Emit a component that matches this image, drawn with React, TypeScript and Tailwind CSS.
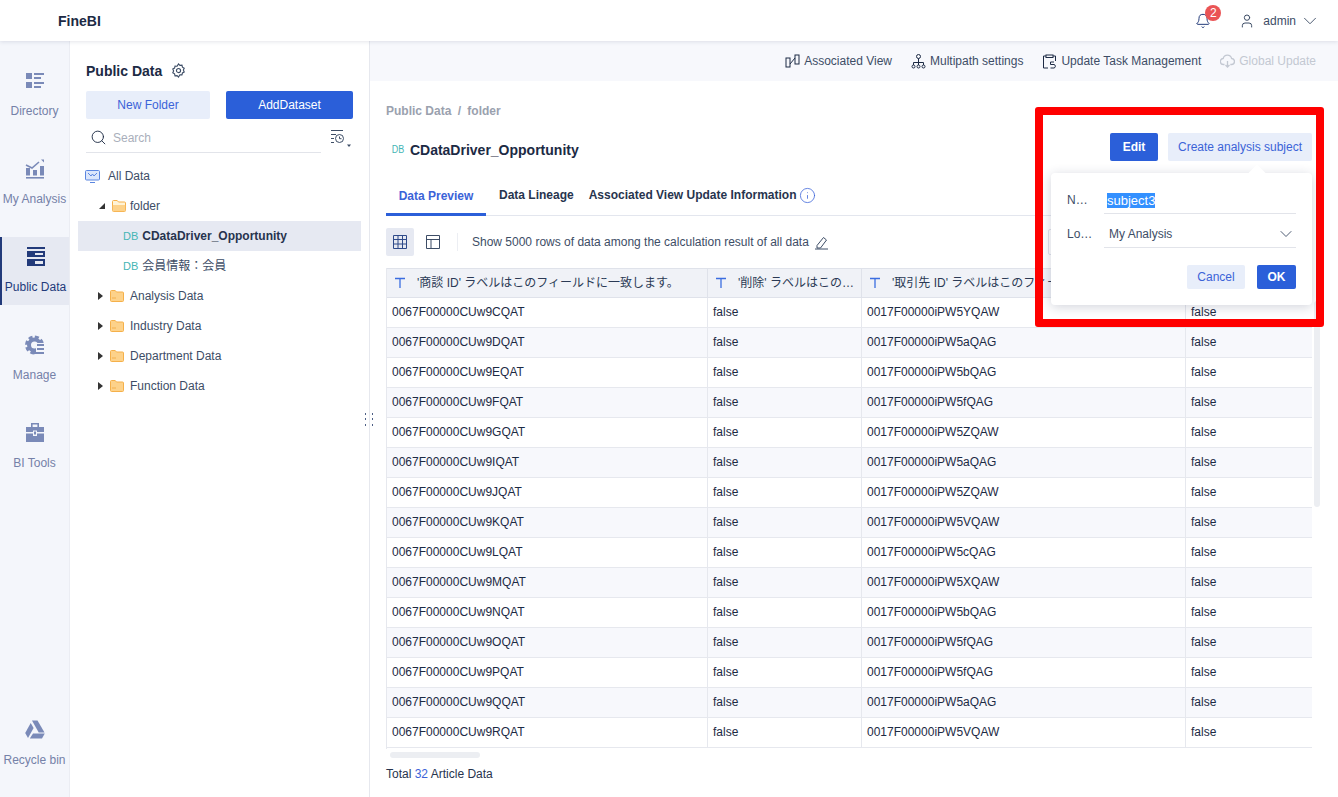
import { Bell, User, ChevronDown, Search, Info } from 'lucide-react';

const font = 'font-["Liberation_Sans","Noto_Sans_CJK_JP",sans-serif]';

const rows = [
  ['0067F00000CUw9CQAT', '0017F00000iPW5YQAW'],
  ['0067F00000CUw9DQAT', '0017F00000iPW5aQAG'],
  ['0067F00000CUw9EQAT', '0017F00000iPW5bQAG'],
  ['0067F00000CUw9FQAT', '0017F00000iPW5fQAG'],
  ['0067F00000CUw9GQAT', '0017F00000iPW5ZQAW'],
  ['0067F00000CUw9IQAT', '0017F00000iPW5aQAG'],
  ['0067F00000CUw9JQAT', '0017F00000iPW5ZQAW'],
  ['0067F00000CUw9KQAT', '0017F00000iPW5VQAW'],
  ['0067F00000CUw9LQAT', '0017F00000iPW5cQAG'],
  ['0067F00000CUw9MQAT', '0017F00000iPW5XQAW'],
  ['0067F00000CUw9NQAT', '0017F00000iPW5bQAG'],
  ['0067F00000CUw9OQAT', '0017F00000iPW5fQAG'],
  ['0067F00000CUw9PQAT', '0017F00000iPW5fQAG'],
  ['0067F00000CUw9QQAT', '0017F00000iPW5aQAG'],
  ['0067F00000CUw9RQAT', '0017F00000iPW5VQAW'],
];

function DirectoryIcon() {
  return (
    <svg width="20" height="20" viewBox="0 0 20 20" fill="#7a8ab8">
      <rect x="1" y="2" width="6" height="6" />
      <rect x="1" y="11" width="6" height="6" />
      <rect x="9" y="2" width="10" height="2" />
      <rect x="9" y="6" width="7" height="2" />
      <rect x="9" y="11" width="10" height="2" />
      <rect x="9" y="15" width="7" height="2" />
    </svg>
  );
}

function AnalysisIcon() {
  return (
    <svg width="20" height="20" viewBox="0 0 20 20" fill="#7a8ab8">
      <rect x="1" y="18" width="18" height="1.6" />
      <rect x="1" y="9" width="4" height="7.5" />
      <rect x="8" y="11" width="4" height="5.5" />
      <rect x="15" y="7" width="4" height="9.5" />
      <path d="M1 6l6 3 7-6" fill="none" stroke="#7a8ab8" strokeWidth="1.6" />
      <path d="M16 0.5l3 0v3z" />
    </svg>
  );
}

function PublicDataIcon() {
  return (
    <svg width="20" height="20" viewBox="0 0 20 20" fill="#223a7a">
      <rect x="1" y="0" width="18" height="2" />
      <path d="M1 4h18v6H1zM9 6v2h8V6z" fillRule="evenodd" />
      <path d="M1 12h18v7H1zM9 14v3h8v-3z" fillRule="evenodd" />
    </svg>
  );
}

function ManageIcon() {
  return (
    <svg width="20" height="20" viewBox="0 0 20 20" fill="none">
      <circle cx="9.500" cy="10" r="5.500" stroke="#7a8ab8" strokeWidth="4" />
      <circle cx="9.500" cy="10" r="8" stroke="#7a8ab8" strokeWidth="3" strokeDasharray="4 2.300" />
      <rect x="11" y="8" width="10" height="12" fill="#f4f6fb" />
      <rect x="12" y="9" width="7" height="2" fill="#7a8ab8" />
      <rect x="12" y="13" width="7" height="2" fill="#7a8ab8" />
      <rect x="9" y="17" width="10" height="2" fill="#7a8ab8" />
    </svg>
  );
}

function ToolsIcon() {
  return (
    <svg width="20" height="20" viewBox="0 0 20 20" fill="#7a8ab8">
      <path d="M6 0h8v4h-1.6V1.6H7.600V4H6z" />
      <path d="M1 4h18v5h-7V7.500H8V9H1z" />
      <path d="M1 10.500h7V13h4v-2.500h7V19H1z" />
      <rect x="9" y="8.500" width="2" height="3" />
    </svg>
  );
}

function RecycleIcon() {
  return (
    <svg width="20" height="20" viewBox="0 0 20 20" fill="#7a8ab8">
      <path d="M7 .5h5.500l7 12h-5.800z" />
      <path d="M5.700 3 .2 13 3 18l5.600-10z" />
      <path d="M8 13.500h11.800L17 18.500H4.800z" />
    </svg>
  );
}

function FolderIcon({ open }: { open?: boolean }) {
  return (
    <svg width="14" height="12" viewBox="0 0 14 12">
      <path d="M.5 1.500A1 1 0 0 1 1.500.5h3.700l1.300 1.500h6a1 1 0 0 1 1 1V10.500a1 1 0 0 1-1 1h-11a1 1 0 0 1-1-1z" fill={open ? '#fff3d6' : '#fdd28a'} stroke="#f5b04a" />
      {open ? <path d="M.8 5h12.400v6.200H.8z" fill="#fdd28a" /> : <path d="M2 8h4" stroke="#f5b04a" />}
    </svg>
  );
}

function Db({ small }: { small?: boolean }) {
  return <span className={`text-[#45b5b5] font-normal ${small ? 'text-[10px] scale-x-90' : 'text-[11px]'}`}>DB</span>;
}

function Caret({ open }: { open?: boolean }) {
  return open ? (
    <svg width="6" height="6" viewBox="0 0 6 6" fill="#333"><path d="M6 0v6H0z" /></svg>
  ) : (
    <svg width="5" height="8" viewBox="0 0 5 8" fill="#333"><path d="M0 0l5 4-5 4z" /></svg>
  );
}

function NavItem({ icon, label, active }: { icon: React.ReactNode; label: string; active?: boolean }) {
  return (
    <div className={`h-[68px] flex flex-col items-center pt-[10px] gap-[12px] text-xs whitespace-nowrap ${active ? 'bg-[#e6e9f2] text-[#223a7a] border-l-2 border-[#223a7a]' : 'text-[#7581a8]'}`}>
      {icon}
      <span>{label}</span>
    </div>
  );
}

function TreeFolder({ label }: { label: string }) {
  return (
    <div className="h-[30px] flex items-center pl-[28px] text-xs text-[#3d4d66]">
      <span className="w-[12px] -ml-px"><Caret /></span>
      <FolderIcon />
      <span className="ml-[6px]">{label}</span>
    </div>
  );
}

function ActionLink({ icon, label, muted }: { icon: React.ReactNode; label: string; muted?: boolean }) {
  return (
    <div className={`flex items-center gap-[4px] ${muted ? 'text-[#c3c8d2]' : 'text-[#3d4d66]'}`}>
      {icon}
      <span>{label}</span>
    </div>
  );
}

function HeaderCell({ label, className }: { label: string; className: string }) {
  return (
    <div className={`flex items-center px-[7px] gap-[11px] border-r border-[#dfe2ea] whitespace-nowrap overflow-hidden ${className}`}>
      <svg width="12" height="12" viewBox="0 0 12 12" fill="none" stroke="#3b6de0" strokeWidth="1.300" className="shrink-0">
        <path d="M1 1.500h10M6 1.500V11" />
      </svg>
      <span>{label}</span>
    </div>
  );
}

export default function App() {
  return (
    <div className={`relative w-[1338px] h-[797px] overflow-hidden bg-white flex flex-col ${font} text-xs text-[#1c2a44]`}>
      {/* Header */}
      <header className="relative z-10 h-[41px] shrink-0 bg-white shadow-[0_1px_4px_rgba(30,40,80,0.12)] flex items-center pl-[58px] pr-[17px]">
        <span className="text-sm font-bold text-[#1c2a44]">FineBI</span>
        <div className="ml-auto flex items-center text-[#3d4d66]">
          <div className="relative">
            <Bell size={16} strokeWidth={1.5} className="text-[#223a7a]" />
            <span className="absolute -top-[8px] left-[10px] w-[16px] h-[16px] rounded-full bg-[#ea5455] text-white text-[12px] leading-[16px] text-center">2</span>
          </div>
          <User size={16} strokeWidth={1.5} className="ml-[28px]" />
          <span className="ml-[8px]">admin</span>
          <ChevronDown size={22} strokeWidth={1} className="ml-[3px]" />
        </div>
      </header>

      <div className="flex flex-1 min-h-0">
        {/* Nav rail */}
        <aside className="w-[70px] shrink-0 bg-[#f4f6fb] border-r border-[#ebedf3] flex flex-col pt-[20px] gap-[20px]">
          <NavItem icon={<DirectoryIcon />} label="Directory" />
          <NavItem icon={<AnalysisIcon />} label="My Analysis" />
          <NavItem icon={<PublicDataIcon />} label="Public Data" active />
          <NavItem icon={<ManageIcon />} label="Manage" />
          <NavItem icon={<ToolsIcon />} label="BI Tools" />
          <div className="mt-auto mb-[19px]">
            <NavItem icon={<RecycleIcon />} label="Recycle bin" />
          </div>
        </aside>

        {/* Tree panel */}
        <section className="relative w-[300px] shrink-0 border-r border-[#e6e8ee] px-[8px]">
          <div className="px-[8px] pt-[20px] h-[50px] flex items-start gap-[9px] text-sm font-bold text-[#1c2a44]">
            Public Data
            <svg width="15" height="15" viewBox="0 0 16 16" fill="none" stroke="#3d4d66" strokeWidth="1.200" className="mt-[2px]">
              <path d="M8 1l1.500 1.500 2.200-.2.500 2.100 1.900 1.100-.9 2 .9 2-1.900 1.100-.5 2.100-2.200-.2L8 15l-1.500-1.500-2.200.2-.5-2.100-1.900-1.100.9-2-.9-2 1.900-1.100.5-2.100 2.200.2z" />
              <circle cx="8" cy="8" r="2.200" />
            </svg>
          </div>
          <div className="flex gap-[16px] px-[8px]">
            <button className="w-[124px] h-[28px] rounded-[2px] bg-[#e8eefa] text-[#3b63d8]">New Folder</button>
            <button className="w-[127px] h-[28px] rounded-[2px] bg-[#2b5fd9] text-white">AddDataset</button>
          </div>
          <div className="flex items-start gap-[9px] pl-[8px] mt-[6px]">
            <div className="w-[235px] h-[28px] pb-[2px] border-b border-[#e2e4ea] flex items-center pl-[4px] gap-[6px] text-[#a9afbb]">
              <Search size={17} strokeWidth={1.3} className="text-[#1c2a44]" />
              <span>Search</span>
            </div>
            <svg width="22" height="22" viewBox="0 0 22 22" fill="none" stroke="#3d4d66" className="mt-[4px]">
              <path d="M1 1.500h12M1 5.500h5M1 9.500h3M1 13.500h3" />
              <circle cx="9.500" cy="9.500" r="4" />
              <path d="M9.500 7.500v2.200h2" />
              <path d="M17 15.500h4l-2 2.500z" fill="#3d4d66" stroke="none" />
            </svg>
          </div>
          <div className="mt-[8px] text-[#3d4d66]">
            <div className="h-[30px] flex items-center pl-[7px] gap-[8px]">
              <svg width="15" height="13" viewBox="0 0 15 13" fill="none">
                <rect x=".5" y=".5" width="14" height="9.500" rx="1" fill="#dbe6fb" stroke="#5b86e0" />
                <path d="M3 3l3 3 1.500-2L9 6l3-3" stroke="#5b86e0" />
                <path d="M5 12.500h5" stroke="#5b86e0" />
              </svg>
              All Data
            </div>
            <div className="h-[30px] flex items-center pl-[21px]">
              <span className="w-[13px] pr-[2px]"><Caret open /></span>
              <FolderIcon open />
              <span className="ml-[4px]">folder</span>
            </div>
            <div className="h-[30px] flex items-center pl-[45px] gap-[4px] bg-[#e6e9f2]">
              <Db />
              <span className="font-bold text-[#27344e]">CDataDriver_Opportunity</span>
            </div>
            <div className="h-[30px] flex items-center pl-[45px] gap-[4px]">
              <Db />
              <span>会員情報：会員</span>
            </div>
            <div className="-ml-[7px]">
              <TreeFolder label="Analysis Data" />
              <TreeFolder label="Industry Data" />
              <TreeFolder label="Department Data" />
              <TreeFolder label="Function Data" />
            </div>
          </div>
          {/* Splitter handle */}
          <div className="absolute -right-[5px] top-[372px] w-[9px] h-[13px] grid grid-cols-2 gap-x-[5px] gap-y-[3px]">
            {[0, 1, 2, 3, 4, 5].map((d) => (
              <span key={d} className="w-px h-[2px] bg-[#4d5f85]" />
            ))}
          </div>
        </section>

        {/* Main */}
        <main className="flex-1 min-w-0 flex flex-col">
          <div className="h-[40px] shrink-0 bg-[#f7f8fc] flex items-center justify-end gap-[19px] pr-[22px] text-[#3d4d66]">
            <ActionLink
              label="Associated View"
              icon={
                <svg width="15" height="14" viewBox="0 0 15 14" fill="none" stroke="#1c2a44">
                  <rect x="1" y="4" width="4" height="9" />
                  <rect x="10" y="1" width="4" height="9" />
                  <path d="M5 10l5-6" />
                </svg>
              }
            />
            <ActionLink
              label="Multipath settings"
              icon={
                <svg width="15" height="15" viewBox="0 0 15 15" fill="none" stroke="#1c2a44">
                  <circle cx="7.500" cy="2.500" r="2" />
                  <path d="M7.500 4.500v4M2.500 11V8.500h10V11M7.500 8.500V11" />
                  <circle cx="2.500" cy="12.500" r="1.500" />
                  <circle cx="7.500" cy="12.500" r="1.500" />
                  <circle cx="12.500" cy="12.500" r="1.500" />
                </svg>
              }
            />
            <ActionLink
              label="Update Task Management"
              icon={
                <svg width="15" height="15" viewBox="0 0 15 15" fill="none" stroke="#1c2a44">
                  <path d="M4 2H1.500v12H6M11 2h2.500v5" />
                  <rect x="4" y="1" width="7" height="2.500" />
                  <path d="M12 8H8.500v2.500H12a1.800 1.800 0 0 1 0 3.500H8.500" />
                </svg>
              }
            />
            <ActionLink
              muted
              label="Global Update"
              icon={
                <svg width="15" height="14" viewBox="0 0 15 14" fill="none" stroke="#c3c8d2" strokeWidth="1.300">
                  <path d="M4.500 10.500H3.500a3 3 0 0 1-.3-6 4.300 4.300 0 0 1 8.400 0 3 3 0 0 1-.3 6h-1" />
                  <path d="M7.500 7v6M5.500 11l2 2 2-2" />
                </svg>
              }
            />
          </div>

          <div className="flex-1 min-h-0 pl-[16px] pr-[26px] relative">
            <div className="pt-[22px] text-[#9aa1ae] font-bold">
              Public Data <span className="mx-[3px]">/</span> folder
            </div>
            <div className="flex items-center mt-[21px] h-[20px] pl-[5px] gap-[5px] text-sm font-bold text-[#1c2a44]">
              <Db small />
              CDataDriver_Opportunity
            </div>

            <div className="flex mt-[20px] h-[36px] border-b border-[#e3e6ee] font-bold text-[#27344e]">
              <div className="w-[100px] h-[36px] flex items-center justify-center border-b-[3px] border-[#2b5fd9] text-[#3b63d8] pb-[2px]">
                Data Preview
              </div>
              <div className="ml-[13px] flex items-center pb-[5px]">Data Lineage</div>
              <div className="ml-[15px] flex items-center gap-[2px] pb-[5px]">
                Associated View Update Information
                <Info size={17} strokeWidth={1.1} className="text-[#3b63d8]" />
              </div>
            </div>

            <div className="flex items-center mt-[12px] h-[28px]">
              <div className="w-[28px] h-[28px] rounded-[2px] bg-[#e6e9f2] flex items-center justify-center">
                <svg width="14" height="14" viewBox="0 0 14 14" fill="none" stroke="#2e4a8a">
                  <path d="M.5.500h13v13H.500zM.5 4.500h13M.5 9h13M5 .5v13M9.500.5v13" />
                </svg>
              </div>
              <div className="w-[38px] flex justify-center">
                <svg width="14" height="14" viewBox="0 0 14 14" fill="none" stroke="#3d4d66">
                  <path d="M.5.500h13v13H.500zM.5 4.500h13M5 4.500v9" />
                </svg>
              </div>
              <div className="ml-[5px] w-px h-[18px] bg-[#eceef3]" />
              <span className="ml-[14px] text-[#3d4d66]">Show 5000 rows of data among the calculation result of all data</span>
              <svg width="15" height="15" viewBox="0 0 15 15" fill="none" stroke="#3d4d66" className="ml-[5px]">
                <path d="M3 10.500l6.500-8 3 2.500-6 8H3zM1 14h13" />
              </svg>
              <div className="ml-auto w-[120px] h-[26px] border border-[#dfe2ea] rounded-[2px]" />
              <div className="w-[144px]" />
            </div>

            {/* Table */}
            <div className="relative mt-[12px] w-[926px] h-[481px] overflow-hidden border-l border-[#e6e8ee] text-[#1c2a44]">
              <div className="flex h-[30px] bg-[#f0f2f7] border-y border-[#dfe2ea] text-[#2b3a55]">
                <HeaderCell className="w-[321px]" label="'商談 ID' ラベルはこのフィールドに一致します。" />
                <HeaderCell className="w-[154px]" label="'削除' ラベルはこの…" />
                <HeaderCell className="w-[324px]" label="'取引先 ID' ラベルはこのフィールドに一致します。" />
                <div className="flex-1" />
              </div>
              {rows.map(([id, account], i) => (
                <div key={id} className={`flex h-[30px] border-b border-[#e6e8ee] ${i % 2 ? 'bg-[#f7f8fc]' : 'bg-white'}`}>
                  <div className="w-[321px] px-[5px] pb-[2px] flex items-center border-r border-[#e6e8ee]">{id}</div>
                  <div className="w-[154px] px-[5px] pb-[2px] flex items-center border-r border-[#e6e8ee]">false</div>
                  <div className="w-[324px] px-[5px] pb-[2px] flex items-center border-r border-[#e6e8ee]">{account}</div>
                  <div className="flex-1 px-[5px] pb-[2px] flex items-center">false</div>
                </div>
              ))}
            </div>
            <div className="mt-[3px] ml-[4px] w-[90px] h-[6px] rounded-full bg-[#eceef2]" />
            <div className="absolute right-[18px] top-[220px] w-[6px] h-[206px] rounded-full bg-[#eceef2]" />
            <div className="mt-[8px] text-[#27344e]">
              Total <span className="text-[#3b63d8]">32</span> Article Data
            </div>

            {/* Popover */}
            <div className="absolute left-[665px] top-[26px] w-[289px] h-[220px] border-[8px] border-[#ff0000] rounded-[3px]" />
            <button className="absolute left-[740px] top-[52px] w-[48px] h-[28px] rounded-[2px] bg-[#2b5fd9] text-white font-bold">Edit</button>
            <button className="absolute left-[798px] top-[52px] w-[144px] h-[28px] rounded-[2px] bg-[#e8eefa] text-[#3b63d8]">Create analysis subject</button>
            <div className="absolute left-[681px] top-[92px] w-[261px] h-[132px] bg-white rounded shadow-[0_2px_12px_rgba(30,40,80,0.2)] px-[16px] text-[#3d4d66]">
              <span className="absolute -top-[6px] left-[200px] w-[12px] h-[12px] rotate-45 bg-white" />
              <div className="flex items-center h-[28px] mt-[13px]">
                <span className="w-[37px]">N…</span>
                <div className="flex-1 h-[27px] border-b border-[#e2e4ea] flex items-center pl-[3px] pt-[2px]">
                  <span className="bg-[#3390ff] text-white text-[13px] leading-[16px] h-[15px] flex items-center">subject3</span>
                </div>
              </div>
              <div className="flex items-center h-[28px] mt-[6px]">
                <span className="w-[37px]">Lo…</span>
                <div className="flex-1 h-[28px] border-b border-[#e2e4ea] flex items-center pl-[5px] justify-between">
                  My Analysis
                  <ChevronDown size={20} strokeWidth={1.1} />
                </div>
              </div>
              <div className="flex justify-end gap-[12px] mt-[17px]">
                <button className="w-[58px] h-[24px] rounded-[2px] bg-[#e8eefa] text-[#3b63d8]">Cancel</button>
                <button className="w-[39px] h-[24px] rounded-[2px] bg-[#2b5fd9] text-white font-bold">OK</button>
              </div>
            </div>
          </div>
        </main>
      </div>
    </div>
  );
}
